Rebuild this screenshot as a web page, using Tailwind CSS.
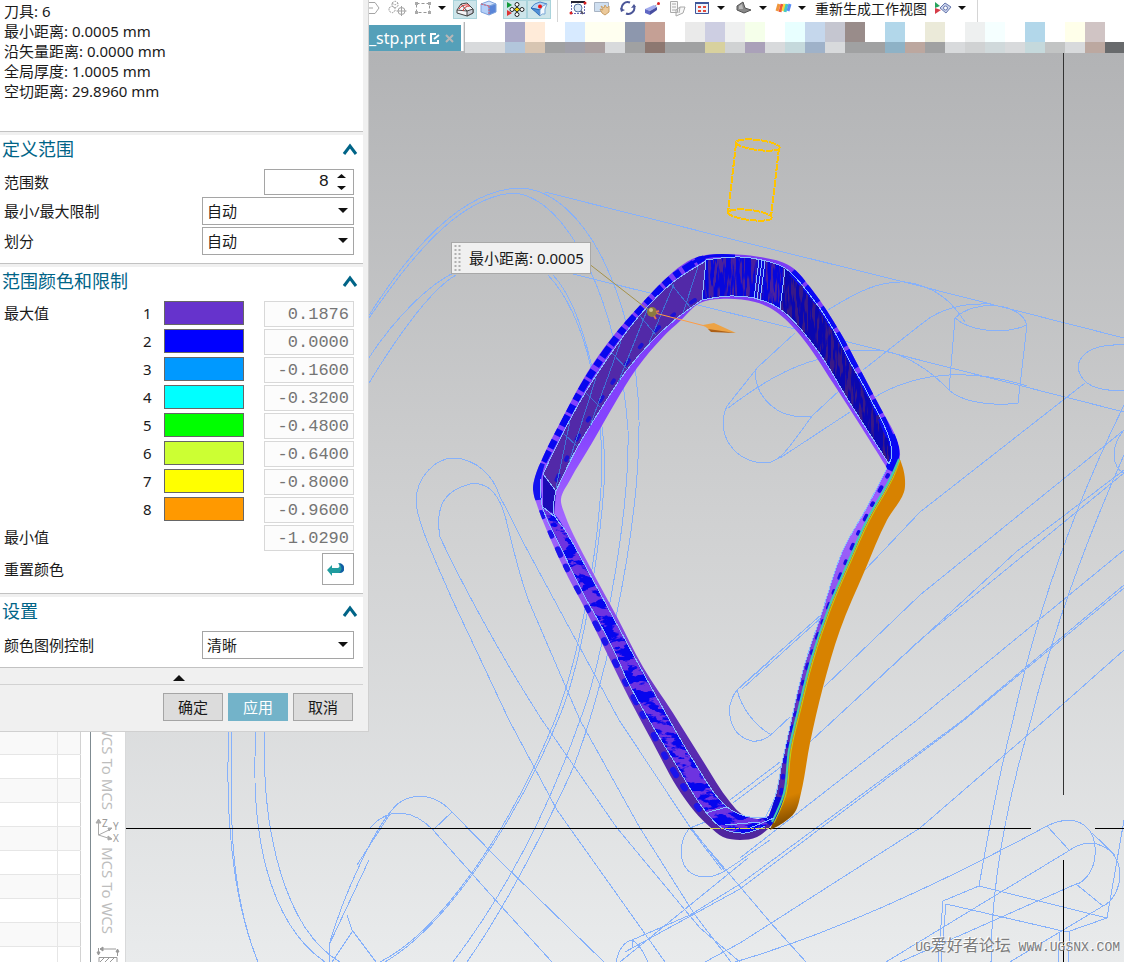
<!DOCTYPE html>
<html lang="zh-CN">
<head>
<meta charset="utf-8">
<title>_stp.prt</title>
<script src="https://cdn.jsdelivr.net/npm/@tailwindcss/browser@4"></script>
</head>
<body class="bg-white text-[15px] leading-5 text-[#1a1a1a] font-['Noto_Sans','Noto_Sans_CJK_SC',sans-serif]">
<div class="relative flex h-screen flex-col overflow-hidden">

  <!-- toolbar -->
  <header class="flex h-[22px] shrink-0 items-start bg-white pl-[369px]">
    <button aria-label="六边形" class="h-[18px] w-[11px]"><svg class="block" width="11" height="18" fill="none" stroke="#a5a5a5"><path d="M0 2.500H6L10 8L6 13.500H0M0 8H4"/></svg></button>
    <button aria-label="装配" class="ml-1.5 h-[18px] w-6"><svg class="block" width="24" height="18" fill="none" stroke="#a3a3a3"><path stroke-dasharray="2 1" d="M6 3L9 1L12 3V6L9 8L6 6ZM3 8L6 6L9 8V11L6 13L3 11ZM6 3L9 5L12 3"/><circle cx="15.500" cy="11" r="3.500"/><path d="M15.500 6V16M10.500 11H20.500"/></svg></button>
    <button aria-label="矩形选择" class="ml-px h-[18px] w-6"><svg class="block" width="24" height="18" fill="none" stroke="#969696"><path stroke-dasharray="3 2" d="M5.500 3.500H18.500V12.500H5.500Z"/><path fill="#aaa" stroke="none" d="M4 2h3v3H4zM17 2h3v3h-3zM4 11h3v3H4zM17 11h3v3h-3z"/></svg></button>
    <button aria-label="选择选项" class="h-[18px] w-3.5"><svg class="block" width="14" height="18"><path d="M3 6H11L7 10Z" fill="#111"/></svg></button>
    <button aria-label="线框" class="ml-1 h-[19px] w-6 border border-[#a9d3db] bg-[#cde5ea]"><svg class="block" width="22" height="18" stroke="#444"><path fill="#f4f4f6" d="M3 9L7 3L13 2L19 8V12L13 15L3 12Z"/><path fill="#c9ccd6" d="M13 10L19 8V12L13 15Z"/><path fill="none" d="M3 9L13 10M7 3L13 10"/><path fill="none" stroke="#d33" d="M5 8Q8 3 15 4M9 10Q10 5 16 5"/></svg></button>
    <button aria-label="着色" class="h-[18px] w-6"><svg class="block" width="24" height="18" stroke="#7da2dc"><path fill="#cfe0fb" d="M4 4L12 1L19 4L12 6Z"/><path fill="#b4cff8" d="M4 4L12 6V15L4 12Z"/><path fill="#5a85d8" d="M12 6L19 4V12L12 15Z"/><path stroke="#e35c6b" stroke-dasharray="2 1" d="M12 6V15M4 4L12 6"/></svg></button>
    <button aria-label="捕捉点" class="ml-0.5 h-[19px] w-6 border border-[#a9d3db] bg-[#cde5ea]"><svg class="block" width="22" height="18"><path fill="#119a3a" d="M3 1L8 4L3 7Z"/><path fill="#d33" d="M3 9L8 12L3 15Z"/><g fill="#fff" stroke="#222"><circle cx="13" cy="3.500" r="2"/><circle cx="8" cy="8.500" r="2"/><circle cx="18" cy="8.500" r="2"/><circle cx="13" cy="13.500" r="2"/></g><path fill="#f6d600" stroke="#222" d="M13 6L16 8.500L13 11L10 8.500Z"/></svg></button>
    <button aria-label="曲面分析" class="h-[19px] w-6 border border-[#a9d3db] bg-[#cde5ea]"><svg class="block" width="22" height="18"><path fill="#b5d6f5" stroke="#4a86cc" d="M3 7Q6 2 12 1L19 3Q14 4 12 9Z"/><path fill="#4f8fd8" stroke="#2d6db8" d="M3 7L12 9Q11 12 12 15Q8 11 3 7Z"/><path fill="#f2f8fe" stroke="#7da9d8" d="M12 9Q14 4 19 3Q16 8 17 13Q14 12 12 15Z"/><circle cx="12" cy="5.500" r="2" fill="#e11"/></svg></button>
    <span class="ml-1.5 h-[22px] w-px bg-[#d5d5d5]"></span>
    <button aria-label="缩放" class="ml-2 h-[18px] w-6"><svg class="block" width="24" height="18"><path d="M5.500 2V14M18.500 3V14M5 13.500H19" stroke="#6a6bb5" stroke-dasharray="2 1"/><path stroke="#223" stroke-width="2" d="M5 2H19"/><circle cx="12" cy="8" r="4" fill="#dbe9f7" stroke="#5673a2"/><path d="M15 11L17 14" stroke="#556" stroke-width="2"/><circle cx="5" cy="13" r="1.500" fill="#d22"/><circle cx="19" cy="3" r="1.500" fill="#d22"/></svg></button>
    <button aria-label="平移" class="h-[18px] w-6"><svg class="block" width="24" height="18"><path fill="#cfdff0" stroke="#a8b4c4" d="M4.500 2.500H18.500V11.500H4.500Z"/><path fill="#ecc99a" stroke="#c9a069" d="M10 9L13 10L11 6L14 8L15 5L17 8L19 6L19 12L15 15L12 13Z"/></svg></button>
    <button aria-label="旋转" class="ml-0.5 h-[18px] w-6"><svg class="block" width="24" height="18" fill="none" stroke="#4a5597" stroke-width="2"><path d="M6 10A6 6 0 0 1 14 2.500M18 6A6 6 0 0 1 10 13.500"/><path fill="#4a5597" stroke="none" d="M4 8L9 10L5 12ZM15 8L20 7L18 4Z"/></svg></button>
    <button aria-label="透视" class="h-[18px] w-6"><svg class="block" width="24" height="18"><path fill="#a3acee" d="M5 9L14 5L17 7L10 11Z"/><path fill="#6068c4" d="M5 9L10 11V15L5 13Z"/><path fill="#464da0" d="M10 11L17 7V10L10 15Z"/><path stroke="#888" stroke-dasharray="1 1" d="M15 6L18 4"/><circle cx="18.500" cy="3.500" r="1.500" fill="#d22"/></svg></button>
    <button aria-label="层叠" class="ml-0.5 h-[18px] w-6"><svg class="block" width="24" height="18" fill="#f7f7f7" stroke="#aaa"><path d="M4.500 1.500H11.500V12.500H4.500ZM6 4H10M6 7H10M6 10H10M10 10L14 7H19L17 13L10 16ZM14 7L13 13"/></svg></button>
    <button aria-label="视图布局" class="h-[18px] w-6"><svg class="block" width="24" height="18"><path fill="#eef3fc" stroke="#3e569a" d="M5.500 2.500H18.500V13.500H5.500Z"/><path fill="#3e569a" d="M5 2H19V4H5Z"/><path fill="#e34a3b" d="M8 6h3v2H8zM13 6h3v2h-3zM8 10h3v2H8zM13 10h3v2h-3z"/></svg></button>
    <button aria-label="布局选项" class="h-[18px] w-3.5"><svg class="block" width="14" height="18"><path d="M3 6H11L7 10Z" fill="#111"/></svg></button>
    <button aria-label="实体" class="ml-1 h-[18px] w-6"><svg class="block" width="24" height="18"><path fill="#888" stroke="#555" d="M5 6L11 2L13 8L19 10L12 13L5 10Z"/><path fill="#bbb" d="M7 6L10 4L11 9L7 9Z"/></svg></button>
    <button aria-label="实体选项" class="h-[18px] w-3.5"><svg class="block" width="14" height="18"><path d="M3 6H11L7 10Z" fill="#111"/></svg></button>
    <button aria-label="颜色条" class="ml-px h-[18px] w-6"><svg class="block" width="24" height="18" fill="none" stroke-width="3"><path stroke="#f0963c" d="M6 11L8 4"/><path stroke="#ef5a3a" d="M9 12L11 4"/><path stroke="#f8db3a" d="M12 11L14 4"/><path stroke="#46c9c2" d="M14 12L16 4"/><path stroke="#5a8cf4" d="M17 11L19 4"/></svg></button>
    <button aria-label="颜色选项" class="h-[18px] w-3.5"><svg class="block" width="14" height="18"><path d="M3 6H11L7 10Z" fill="#111"/></svg></button>
    <button class="ml-1.5 whitespace-nowrap text-sm leading-[18px]">重新生成工作视图</button>
    <button aria-label="显示对象" class="ml-1 h-[18px] w-6"><svg class="block" width="24" height="18"><path fill="#26a35c" d="M4 2L9 6L4 8Z"/><path fill="#d63c49" d="M4 8L10 10L4 14Z"/><path fill="#ccd4ed" stroke="#6778ad" d="M9 8L14 3L20 7L15 13Z"/><circle cx="14.500" cy="8" r="2" fill="#fff" stroke="#6778ad"/></svg></button>
    <button aria-label="显示选项" class="h-[18px] w-3.5"><svg class="block" width="14" height="18"><path d="M3 6H11L7 10Z" fill="#111"/></svg></button>
    <span class="ml-2 h-[22px] w-px bg-[#d5d5d5]"></span>
  </header>

  <!-- file tabs -->
  <nav class="flex h-[31px] shrink-0 overflow-hidden bg-[#b4b5b7] pl-[369px]">
    <div class="flex h-[29px] w-[95px] shrink-0 border-r border-[#e4e4e4] bg-white pt-[3px]">
      <div class="flex w-[92px] items-center bg-[#55a0b9] text-white">
        <a href="#view" class="w-[60px] text-base leading-6">_stp.prt</a>
        <svg width="12" height="12" fill="none" stroke="#fff" stroke-width="2"><path d="M7 2H2V11H9V8M5 7L10 3"/></svg>
        <button aria-label="关闭" class="ml-1"><svg class="block" width="9" height="9" stroke="#b7b7b7" stroke-width="2"><path d="M1 1L8 8M8 1L1 8"/></svg></button>
      </div>
    </div>
    <div class="ml-px flex-1 overflow-hidden bg-white">
      <div id="upper" class="flex h-5"></div>
      <div id="lower" class="flex h-[11px]"></div>
    </div>
  </nav>

  <div class="flex min-h-0 flex-1">
    <!-- navigator -->
    <aside class="flex w-[91px] shrink-0 flex-col justify-end border-r border-[#7f8b91] pr-[9px]">
      <table class="w-full border-collapse border-r border-[#d2d2d2]">
        <tbody>
          <tr class="h-6 border-b border-[#e6e6e6] bg-[#f9f9f9]"><td class="w-[57px] border-r border-[#e6e6e6]"></td><td></td></tr>
          <tr class="h-6 border-b border-[#e6e6e6]"><td class="border-r border-[#e6e6e6]"></td><td></td></tr>
          <tr class="h-6 border-b border-[#e6e6e6] bg-[#f9f9f9]"><td class="border-r border-[#e6e6e6]"></td><td></td></tr>
          <tr class="h-6 border-b border-[#e6e6e6]"><td class="border-r border-[#e6e6e6]"></td><td></td></tr>
          <tr class="h-6 border-b border-[#e6e6e6] bg-[#f9f9f9]"><td class="border-r border-[#e6e6e6]"></td><td></td></tr>
          <tr class="h-6 border-b border-[#e6e6e6]"><td class="border-r border-[#e6e6e6]"></td><td></td></tr>
          <tr class="h-6 border-b border-[#e6e6e6] bg-[#f9f9f9]"><td class="border-r border-[#e6e6e6]"></td><td></td></tr>
          <tr class="h-6 border-b border-[#e6e6e6]"><td class="border-r border-[#e6e6e6]"></td><td></td></tr>
          <tr class="h-6 border-b border-[#e6e6e6] bg-[#f9f9f9]"><td class="border-r border-[#e6e6e6]"></td><td></td></tr>
          <tr class="h-4"><td class="border-r border-[#e6e6e6]"></td><td></td></tr>
        </tbody>
      </table>
    </aside>
    <!-- vertical command strip -->
    <div class="flex w-[34px] shrink-0 flex-col items-center justify-end bg-white text-[15px] leading-5 text-[#bdbdbd]">
      <button class="[writing-mode:vertical-rl]">WCS To MCS</button>
      <svg class="mt-2 mb-1 overflow-visible" width="26" height="25" fill="none" stroke="#aaa"><path d="M3.500 17V3M3.500 17L16 11M3.500 17L16 21"/><path fill="#aaa" d="M1 5L3.500 1L6 5ZM13 10L17 10L14 13ZM13 18L17 21L13 22Z"/><g fill="#999" stroke="none" font-family="Noto Sans" font-size="10"><text x="7" y="9">Z</text><text x="18" y="12">Y</text><text x="18" y="24">X</text></g></svg>
      <button class="[writing-mode:vertical-rl]">MCS To WCS</button>
      <svg class="mt-3" width="24" height="16" fill="none" stroke="#999"><path d="M4 3H20M2.500 2V8M21.500 3V10M3 16V11.500H21V16M4 16L8 12M9 16L13 12M14 16L18 12"/><path fill="#999" d="M7 1L4 3L7 5ZM1 6H4L2.500 9ZM20 6H23L21.500 3Z"/></svg>
    </div>

    <!-- graphics view -->
    <main id="view" class="relative min-w-0 flex-1 border-l border-[#d8d9da] bg-linear-to-b from-[#b2b3b5] via-[#cfd0d1] to-[#e9ebec]">
      <svg class="absolute inset-0 size-full" viewBox="126 53 998 909" preserveAspectRatio="xMinYMin slice">
        <defs>
          <linearGradient id="rim" gradientUnits="userSpaceOnUse" x1="0" y1="254" x2="0" y2="840"><stop offset="0" stop-color="#7c3cf4"/><stop offset=".3" stop-color="#8543ff"/><stop offset=".45" stop-color="#a266ff"/><stop offset=".6" stop-color="#8c51ee"/><stop offset=".8" stop-color="#5d2db8"/><stop offset="1" stop-color="#4e259d"/></linearGradient>
          <linearGradient id="gold" gradientUnits="userSpaceOnUse" x1="782" y1="798" x2="792" y2="828"><stop offset="0" stop-color="#d78200"/><stop offset="1" stop-color="#6d4000"/></linearGradient>
          <filter id="streaks" x="0" y="0" width="1" height="1" color-interpolation-filters="sRGB"><feTurbulence type="fractalNoise" baseFrequency=".35 .04" numOctaves="2" seed="4"/><feColorMatrix values="0 0 0 0 .29  0 0 0 0 .13  0 0 0 0 .62  10 0 0 0 -5"/><feComposite in2="SourceGraphic" operator="in"/></filter>
          <filter id="specks" x="0" y="0" width="1" height="1" color-interpolation-filters="sRGB"><feTurbulence type="fractalNoise" baseFrequency=".06 .12" numOctaves="4" seed="8"/><feColorMatrix values="0 0 0 0 .43  0 0 0 0 .2  0 0 0 0 .88  12 0 0 0 -5.500"/><feComposite in2="SourceGraphic" operator="in"/></filter>
          <clipPath id="ring"><path data-smooth clip-rule="evenodd" d="M720 254L760 257L790 266L813 291L840 332L860 369L880 407L897 440L900 456L892 477L868 520L850 560L830 607L812 660L800 707L790 750L785 793L773 823L757 837L740 840L723 837L710 827L695 812L677 787L653 743L630 700L599 637L582 603L568 577L550 538L537 505L533 490L535 477L543 457L563 417L587 373L610 340L643 302L673 272L692 259L706 255ZM720 299L700 303L680 321L663 337L637 368L615 403L592 443L570 480L561 499L565 515L590 567L617 617L643 667L673 713L703 761L730 802L743 815L757 819L769 816L775 797L782 763L792 717L803 670L822 612L843 550L867 507L887 468L860 425L833 383L800 335L775 311L755 302Z"/></clipPath>
        </defs>

        <!-- wireframe of the hidden bodies -->
        <g fill="none" stroke="#86b1fb" shape-rendering="crispEdges">
          <path d="M366 320C395 275 450 190 520 188C585 190 637 300 639 420C640 540 600 705 570 775C535 850 500 915 467 962"/>
          <path d="M366 322C400 275 450 199 512 193C570 195 620 310 628 430C630 520 600 670 580 720C545 820 500 900 453 962"/>
          <path d="M366 362C400 310 435 280 460 270M366 388C395 340 430 290 456 275M548 275C590 320 602 410 602 470C598 560 578 660 555 720C510 830 440 932 380 962"/>
          <path d="M553 275C586 310 604 410 605 470C600 560 580 670 558 720C510 835 440 930 385 962"/>
          <path d="M545 192L735 240L904 282L1124 338M573 274L795 329L884 351L1124 412M828 310C860 290 880 281 905 282C938 286 954 305 965 322"/>
          <path d="M232 732C230 810 229 890 258 962M229 732C225 810 232 900 258 962M256 732C250 830 267 922 325 962M265 732C261 830 285 930 340 962"/>
          <path d="M329 962V945C345 890 375 829 392 810C405 793 432 790 452 812L500 861L604 962M330 943L369 860M357 865L390 814M370 828C390 805 415 811 433 830L490 894L552 962M452 812L433 830M347 915L352 930L376 962M352 932L332 962"/>
          <path d="M416 500C417 477 435 458 454 458C475 459 493 474 500 497C510 515 520 537 530 555L619 720L692 830L770 922L806 962M416 500C416 520 435 560 452 599L509 720L557 810L665 962"/>
          <path d="M440 537C436 513 439 492 470 484C490 481 502 497 508 528C515 556 522 585 530 604L580 720L640 828L695 915L731 962M440 537C460 580 500 655 542 720L617 828L700 928L740 962"/>
          <path d="M955 318C975 299 1020 302 1027 325L1018 403C990 407 960 401 949 390ZM955 318C968 330 1002 336 1027 325M949 390C930 370 905 354 884 351L850 350M863 370L924 322Q948 303 987 304M875 397C915 373 967 367 1027 386"/>
          <path d="M795 333L758 367L727 406C714 435 736 463 765 463C778 463 785 454 812 416L840 390M755 370C755 397 777 421 812 416M728 408C755 388 786 367 820 359M780 458L850 412"/>
          <path d="M1124 345C1080 343 1068 367 1087 383C1098 391 1112 391 1124 390M1124 430C1110 446 1112 468 1124 473M865 570L920 512L1085 383M824 687L920 595L1124 430M810 742L920 640L1124 473M812 740L1016 552L1124 470"/>
          <path d="M770 661L737 690C724 707 728 735 752 741C767 743 775 730 790 717M737 690C742 710 757 727 770 734M740 687L822 614M742 689L823 616"/>
          <path d="M620 962L748 858M730 800L780 762M733 803L782 766M740 858L917 720L1124 550M740 884L963 720L1124 585M740 889L963 721L1124 588M740 943L920 828L1045 720L1124 650"/>
          <path d="M710 820L690 828C676 842 677 877 705 877C721 877 730 867 770 840M690 828L722 870M692 829L725 871"/>
          <path d="M616 962Q620 943 632 940L690 915L740 884M625 952L665 930L740 889M632 940V948M632 940Q641 945 648 962M705 962L740 943"/>
          <path d="M735 962C810 940 910 900 1045 827C1078 810 1097 828 1095 855C1094 875 1080 884 1076 884L900 962M886 962L1070 850C1092 834 1120 848 1120 875C1119 898 1104 906 1103 906L1010 962M1047 826L1069 850M1076 884L1103 906M1092 833L1115 855"/>
          <path d="M1124 405Q1048 560 1013 720Q997 782 979 886L943 901L938 962M1124 455Q1060 600 1031 720Q991 855 991 962M979 886L1107 918L1067 932L946 904L941 962M1107 918L1124 820M1060 932L1058 962M1070 932L1068 962"/>
        </g>

        <path d="M126 828.500H1031M1095 828.500H1124M1063.500 860V962" stroke="#000"/>
        <path d="M1063.500 53V795" stroke="#333"/>

        <!-- coloured ring -->
        <path data-smooth fill="url(#gold)" d="M899 457L903 468L905 480L904 492L887 520L865 570L840 630L823 687L810 743L801 793L795 812L783 823L770 830L773 822L785 793L790 750L800 707L812 660L830 607L850 560L868 520L892 477Z"/>
        <g clip-path="url(#ring)">
          <path fill="url(#rim)" d="M520 240H920V850H520Z"/>
          <path data-smooth fill="#5229a8" d="M706 261L672 283L640 315L612 352L585 393L563 433L543 474L556 491L577 448L597 415L627 370L653 340L677 318L702 300Z"/>
          <path data-smooth fill="#0707dc" d="M706 260L740 257L770 262L785 268L813 299L833 329L850 362L867 392L892 453L889 464L850 403L815 347L780 309L758 299L730 296L702 300Z"/>
          <path data-smooth filter="url(#streaks)" d="M706 260L740 257L770 262L785 268L813 299L833 329L850 362L867 392L892 453L889 464L850 403L815 347L780 309L758 299L730 296L702 300Z"/>
          <path data-smooth fill="#130a50" opacity=".3" d="M785 268L813 299L833 329L850 362L867 392L892 453L889 464L850 403L815 347L780 309Z"/>
          <path fill="#1b0bb5" d="M543 475L556 491L554 516L543 507Z"/>
          <path data-smooth fill="#0606ee" d="M543 508L555 515L565 530L593 580L627 643L660 703L693 760L727 807L745 816L774 818L765 826L745 833L722 828L705 811L675 763L645 713L627 680L615 653L598 620L585 597L563 552Z"/>
          <path data-smooth filter="url(#specks)" d="M543 508L555 515L565 530L593 580L627 643L660 703L693 760L727 807L745 816L774 818L765 826L745 833L722 828L705 811L675 763L645 713L627 680L615 653L598 620L585 597L563 552Z"/>
          <path data-smooth fill="none" stroke="#0707ef" stroke-width="7" stroke-dasharray="9 3 12 4 7 5" d="M704 257L673 277L641 308L611 345L586 382L563 424L542 464"/>
          <path data-smooth fill="none" stroke="#0707ef" stroke-width="3" d="M690 264L706 257L735 256"/>
          <path data-smooth fill="none" stroke="#0b0bf3" stroke-width="8" stroke-dasharray="16 4 20 6 25 5" d="M792 272L813 295L836 330L855 365L873 399L893 444"/>
          <path data-smooth fill="none" stroke="#1212f0" stroke-width="8" d="M541 463L537 480L538 500"/>
          <path data-smooth fill="none" stroke="#0808f4" stroke-width="9" d="M891 435L895 454L889 470"/>
          <path data-smooth fill="none" stroke="#0a0ad8" stroke-width="9" d="M779 797L776 810L768 824"/>
          <path data-smooth fill="none" stroke="#1b14eb" stroke-width="6" stroke-linecap="round" stroke-dasharray="4 18 3 15 6 13 3 21" d="M541 513L565 565L583 601L601 634L615 662L634 698L650 728L676 775L699 809"/>
          <path data-smooth fill="none" stroke="#180de6" stroke-width="4" stroke-linecap="round" stroke-dasharray="2 12 4 14" d="M888 475L864 521L845 564L826 613L808 665L796 712L786 755L781 795"/>
          <path data-smooth fill="none" stroke="#1b12d4" stroke-width="4" stroke-linecap="round" stroke-dasharray="5 20 3 17" d="M695 300L672 316L650 336L623 368L593 412L573 446L555 483"/>
        </g>
        <path data-smooth fill="none" stroke="#42cfae" stroke-width="2" d="M899 459L891 477L867 520L849 560L829 607L811 660L799 707L789 750L784 793L772 822"/>
        <path data-smooth fill="none" stroke="#b8d51c" d="M900 460L893 478L869 521L851 561L831 608L813 661L801 708L791 751L786 794L774 823"/>
        <g fill="none" stroke="#8cbcff" shape-rendering="crispEdges">
          <path data-smooth d="M706 260L740 257L770 262L785 268L813 299L833 329L850 362L867 392L892 453L889 464L850 403L815 347L780 309L758 299L730 296L702 300"/>
          <path data-smooth d="M706 261L672 283L640 315L612 352L585 393L563 433L543 474L556 491L577 448L597 415L627 370L653 340L677 318L702 300"/>
          <path data-smooth d="M541 479L542 505L563 552L585 597L598 620L615 653L627 680L645 713L675 763L705 811L722 828L745 833L765 826"/>
          <path data-smooth d="M556 491L554 514L565 530L593 580L627 643L660 703L693 760L727 807L745 816L768 818"/>
          <path data-smooth d="M887 468L867 507L843 550L822 612L803 670L792 717L782 763L775 797L765 818"/>
          <path d="M543 507L555 517M705 813L727 807M706 260L702 300M759 260L754 299M762 260L757 300M765 261L760 301M785 269L780 309M750 828L774 818M725 825L760 822"/>
          <path stroke="#3f70d5" d="M698 267L683 313M674 284L649 343M648 308L618 383M621 341L590 426M596 378L569 462M570 421L556 488M671 284L690 307M640 316L656 335M612 353L627 369M586 393L600 407M563 433L577 446"/>
        </g>
        <path stroke="#d5d64d" stroke-dasharray="10 1 3 1" d="M710 828.500H769"/>

        <!-- tool outline -->
        <g fill="none" stroke="#ffc400" stroke-width="2" shape-rendering="crispEdges" stroke-dasharray="7 1"><ellipse cx="758" cy="145" rx="22" ry="5" transform="rotate(7 758 145)"/><path d="M736 144L728 213M779 148L771 217"/><ellipse cx="750" cy="215" rx="22" ry="5" transform="rotate(7 750 215)"/></g>
        <!-- probe with its direction -->
        <path d="M588 263L651 312" stroke="#a5924a"/>
        <path d="M651 312L705 326" stroke="#ff9c45"/>
        <path fill="#eda345" d="M703 325L714 323L736 333L711 331Z"/><path fill="#ad6017" d="M708 329L711 332L735 333L715 330Z"/>
        <circle cx="652" cy="312" r="5" fill="#8b7a40"/><circle cx="651" cy="310" r="2" fill="#cfc084"/><path stroke="#dc7650" stroke-width="2" d="M656 312L659 311M654 316L656 319"/>
      </svg>

      <!-- measurement label -->
      <div class="absolute left-[325px] top-[189px] flex h-8 items-center gap-2 border border-[#a8a8a8] bg-[#f0f0f0] pl-0.5 pr-1.5 whitespace-nowrap">
        <svg width="7" height="26"><path d="M1.500 0V26M5.500 0V26" stroke="#b0b0b0" stroke-width="2" stroke-dasharray="2 2"/></svg>
        <span>最小距离: 0.0005</span>
      </div>
      <p class="absolute right-1 bottom-0.5 whitespace-nowrap text-base leading-6 text-[#7c7c7c] text-shadow-[-1px_-1px_0_#ffffff] font-['Liberation_Mono','Noto_Sans_CJK_SC',monospace]"><span class="text-[13px]">UG</span>爱好者论坛<span class="text-[13px]"> WWW.UGSNX.COM</span></p>
    </main>
  </div>

  <!-- thickness dialog -->
  <form class="absolute left-0 top-0 w-[369px] border-r border-b border-[#d0d0d0] bg-[#f0f0f0] pr-[5px]">
    <section class="h-[132px] border-b border-[#c2c2c2] bg-white pl-1 pt-px">
      <p>刀具: 6</p><p>最小距离: 0.0005 mm</p><p>沿矢量距离: 0.0000 mm</p><p>全局厚度: 1.0005 mm</p><p>空切距离: 29.8960 mm</p>
    </section>

    <section class="mt-[3px] border-b border-[#c2c2c2] bg-white pr-[9px] pb-2">
      <h2 class="flex h-7 items-center justify-between pl-0.5 text-lg text-[#006487]">定义范围<button type="button" aria-label="折叠定义范围" class="-mr-1"><svg class="block" width="16" height="12" fill="none" stroke="#006487" stroke-width="3"><path d="M2 11L8 3L14 11"/></svg></button></h2>
      <div class="mt-1.5 flex h-[26px] items-center justify-between pl-1"><label for="count">范围数</label>
        <div class="flex h-[26px] w-[90px] border border-[#a5a5a5] bg-white">
          <input id="count" value="8" class="w-16 text-right text-[17px] outline-none font-['Liberation_Mono',monospace]">
          <div class="ml-2 flex flex-col justify-center gap-1"><button type="button" aria-label="增加"><svg class="block" width="9" height="8"><path d="M0 6H9L4.500 2Z" fill="#111"/></svg></button><button type="button" aria-label="减少"><svg class="block" width="9" height="8"><path d="M0 2H9L4.500 6Z" fill="#111"/></svg></button></div>
        </div></div>
      <div class="mt-0.5 flex h-7 items-center justify-between pl-1"><label for="limit">最小/最大限制</label>
        <div class="grid w-[152px] items-center"><select id="limit" class="col-start-1 row-start-1 h-7 appearance-none border border-[#a5a5a5] bg-white pl-1"><option>自动</option></select><svg class="pointer-events-none col-start-1 row-start-1 mr-1.5 justify-self-end" width="10" height="6"><path d="M0 0H10L5 5Z" fill="#111"/></svg></div></div>
      <div class="mt-0.5 flex h-7 items-center justify-between pl-1"><label for="split">划分</label>
        <div class="grid w-[152px] items-center"><select id="split" class="col-start-1 row-start-1 h-7 appearance-none border border-[#a5a5a5] bg-white pl-1"><option>自动</option></select><svg class="pointer-events-none col-start-1 row-start-1 mr-1.5 justify-self-end" width="10" height="6"><path d="M0 0H10L5 5Z" fill="#111"/></svg></div></div>
    </section>

    <section class="mt-[3px] border-b border-[#c2c2c2] bg-white pr-[9px] pb-2">
      <h2 class="flex h-7 items-center justify-between pl-0.5 text-lg text-[#006487]">范围颜色和限制<button type="button" aria-label="折叠范围颜色和限制" class="-mr-1"><svg class="block" width="16" height="12" fill="none" stroke="#006487" stroke-width="3"><path d="M2 11L8 3L14 11"/></svg></button></h2>
      <div id="ranges" class="mt-1.5 flex flex-col gap-0.5"></div>
      <div class="mt-0.5 flex h-8 items-center justify-between pl-1"><label for="reset">重置颜色</label>
        <button id="reset" type="button" class="flex size-8 items-center justify-center border border-[#a5a5a5] bg-white pr-1"><svg width="18" height="16"><path fill="#209c9f" d="M0 9L5 4V7H11Q14 6 11 2Q18 3 17 9Q16 12 12 12H5V15Z"/><path fill="#125ca5" d="M12 2Q18 3 17 9Q16 12 12 12Q17 8 12 2Z"/></svg></button></div>
    </section>

    <section class="mt-[3px] border-b border-[#c2c2c2] bg-white pr-[9px] pb-2">
      <h2 class="flex h-7 items-center justify-between pl-0.5 text-lg text-[#006487]">设置<button type="button" aria-label="折叠设置" class="-mr-1"><svg class="block" width="16" height="12" fill="none" stroke="#006487" stroke-width="3"><path d="M2 11L8 3L14 11"/></svg></button></h2>
      <div class="mt-1.5 flex h-7 items-center justify-between pl-1"><label for="legend">颜色图例控制</label>
        <div class="grid w-[152px] items-center"><select id="legend" class="col-start-1 row-start-1 h-7 appearance-none border border-[#a5a5a5] bg-white pl-1"><option>清晰</option></select><svg class="pointer-events-none col-start-1 row-start-1 mr-1.5 justify-self-end" width="10" height="6"><path d="M0 0H10L5 5Z" fill="#111"/></svg></div></div>
    </section>
    <button type="button" aria-label="收起对话框" class="flex h-[17px] w-full items-center justify-center border-b border-[#d2d2d2] pr-1.5 pt-0.5"><svg width="12" height="7"><path d="M0 7H12L6 1Z" fill="#111"/></svg></button>
    <div class="flex justify-end gap-[5px] pt-2 pr-2.5 pb-2.5">
      <button type="button" class="h-7 w-[60px] border border-[#a5a5a5] bg-[#dcdcdc]">确定</button>
      <button type="button" class="h-7 w-[60px] bg-[#73b3c9] text-white">应用</button>
      <button type="button" class="h-7 w-[60px] border border-[#a5a5a5] bg-[#dcdcdc]">取消</button>
    </div>
  </form>
</div>

<script>
const ranges = [
  ['最大值','1','#6633cc','0.1876'],['','2','#0000ff','0.0000'],['','3','#0099ff','-0.1600'],
  ['','4','#00ffff','-0.3200'],['','5','#00ff00','-0.4800'],['','6','#ccff33','-0.6400'],
  ['','7','#ffff00','-0.8000'],['','8','#ff9900','-0.9600'],['最小值','','','-1.0290']];
document.getElementById('ranges').innerHTML = ranges.map(([label, n, color, value], i) => `
  <div class="flex h-[26px] items-center pl-1">
    <label for="value${i}" class="w-[135px] pb-0.5">${label}</label>
    <span class="w-[25px] pb-0.5 pl-1">${n}</span>
    ${color ? `<button type="button" aria-label="颜色 ${n}" class="h-6 w-20 self-start border border-[#666]" style="background:${color}"></button>` : ''}
    <input id="value${i}" value="${value}" disabled class="ml-auto h-[26px] w-[90px] border border-[#d8d8d8] bg-[#fcfcfc] pr-1 text-right text-[17px] text-[#757575] font-['Liberation_Mono',monospace]">
  </div>`).join('');

const upper = 'fff fff aaa9c8 ffebd9 fff d7eaff fffff0 fffff0 8d97ad c5a095 fff eaeaea cdcee2 eff0f0 f5ffea fff e8ffff c5d7ec c5c6d0 998c8a fff b2d7ea fff ebead9 fff eef0f0 f5ffff fff b2d7ea fff ffffea d0c4c4 fff';
const lower = 'd8dadc d8dadc b2c6db d7c5b2 a0a1a2 a0a0aa aa9fa0 d8dadc a0a1a2 8d7871 a0a1a2 a0a1a2 d8d19e d0d2d3 aaa1b9 d8dadc c5d9dc 9fb2c9 d8dadc a0a1a2 a0a1a2 8eb2c6 bca79f a0a1a2 d8dadc d0d2d3 d0d9db d8dadc c5d9dc c2c4c4 d8dadc bca8a0 686a6c';
const fill = (id, colors) => document.getElementById(id).innerHTML =
  colors.split(' ').map(c => `<span class="h-full w-5 shrink-0" style="background:#${c}"></span>`).join('');
fill('upper', upper);
fill('lower', lower);

// Rounds the polylines of the ring into splines, leaving sharp corners as they are.
function smooth(sub) {
  const closed = sub.includes('Z');
  const n = sub.match(/[\d.]+/g).map(Number), p = [];
  for (let i = 0; i < n.length; i += 2) p.push([n[i], n[i + 1]]);
  const len = p.length;
  const at = i => closed ? p[(i + len) % len] : p[Math.max(0, Math.min(len - 1, i))];
  const tangent = i => {
    const a = at(i - 1), b = at(i), c = at(i + 1);
    const u = [b[0] - a[0], b[1] - a[1]], v = [c[0] - b[0], c[1] - b[1]];
    const lu = Math.hypot(...u), lv = Math.hypot(...v);
    if (!lu || !lv || (u[0] * v[0] + u[1] * v[1]) / (lu * lv) < 0.7) return [0, 0];
    return [u[0] / lu + v[0] / lv, u[1] / lu + v[1] / lv];
  };
  let d = `M${p[0]}`;
  for (let i = 0; i < (closed ? len : len - 1); i++) {
    const a = at(i), b = at(i + 1), s = Math.hypot(b[0] - a[0], b[1] - a[1]) / 6;
    const t = tangent(i), w = tangent(i + 1);
    d += `C${a[0] + t[0] * s} ${a[1] + t[1] * s} ${b[0] - w[0] * s} ${b[1] - w[1] * s} ${b[0]} ${b[1]}`;
  }
  return d + (closed ? 'Z' : '');
}
document.querySelectorAll('[data-smooth]').forEach(path =>
  path.setAttribute('d', path.getAttribute('d').match(/M[^M]+/g).map(smooth).join('')));
</script>
</body>
</html>
